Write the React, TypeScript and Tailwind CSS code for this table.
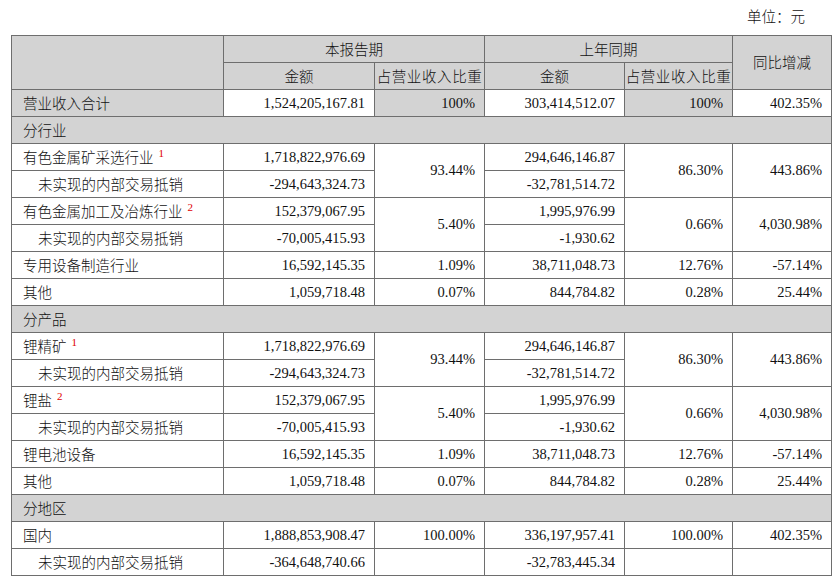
const GRAY = 'bg-[#d3d3d3]';
const cell = 'border border-[#6e6e6e] h-[27px] py-0 leading-none whitespace-nowrap';
const pad = 'px-[9px]';

type Pair = {
  label: string;
  sup?: string;
  a: string;
  b: string;
  pctA: string;
  c: string;
  d: string;
  pctB: string;
  yoy: string;
};

type Single = { label: string; a: string; pctA: string; b: string; pctB: string; yoy: string };

function Label({ text, sup, indent }: { text: string; sup?: string; indent?: boolean }) {
  return (
    <td className={`${cell} text-left pr-[9px] ${indent ? 'pl-[26px]' : 'pl-[11px]'}`}>
      <span className="cjk">{text}</span>
      {sup && (
        <span className="relative -top-[6px] ml-[5px] text-[11px] text-[#e00000] num">{sup}</span>
      )}
    </td>
  );
}

function Num({ v, rows }: { v: string; rows?: number }) {
  return (
    <td rowSpan={rows} className={`${cell} ${pad} text-right num`}>
      {v}
    </td>
  );
}

function PairRows({ p }: { p: Pair }) {
  return (
    <>
      <tr>
        <Label text={p.label} sup={p.sup} />
        <Num v={p.a} />
        <Num v={p.pctA} rows={2} />
        <Num v={p.c} />
        <Num v={p.pctB} rows={2} />
        <Num v={p.yoy} rows={2} />
      </tr>
      <tr>
        <Label text="未实现的内部交易抵销" indent />
        <Num v={p.b} />
        <Num v={p.d} />
      </tr>
    </>
  );
}

function SingleRow({ s }: { s: Single }) {
  return (
    <tr>
      <Label text={s.label} />
      <Num v={s.a} />
      <Num v={s.pctA} />
      <Num v={s.b} />
      <Num v={s.pctB} />
      <Num v={s.yoy} />
    </tr>
  );
}

function Section({ title }: { title: string }) {
  return (
    <tr className={GRAY}>
      <td colSpan={6} className={`${cell} pl-[11px] text-left cjk`}>
        {title}
      </td>
    </tr>
  );
}

const pair1: Pair = {
  label: '有色金属矿采选行业',
  sup: '1',
  a: '1,718,822,976.69',
  b: '-294,643,324.73',
  pctA: '93.44%',
  c: '294,646,146.87',
  d: '-32,781,514.72',
  pctB: '86.30%',
  yoy: '443.86%',
};
const pair2: Pair = {
  label: '有色金属加工及冶炼行业',
  sup: '2',
  a: '152,379,067.95',
  b: '-70,005,415.93',
  pctA: '5.40%',
  c: '1,995,976.99',
  d: '-1,930.62',
  pctB: '0.66%',
  yoy: '4,030.98%',
};
const equip: Single = {
  label: '专用设备制造行业',
  a: '16,592,145.35',
  pctA: '1.09%',
  b: '38,711,048.73',
  pctB: '12.76%',
  yoy: '-57.14%',
};
const other: Single = {
  label: '其他',
  a: '1,059,718.48',
  pctA: '0.07%',
  b: '844,784.82',
  pctB: '0.28%',
  yoy: '25.44%',
};

export default function App() {
  return (
    <div className="w-[840px] h-[586px] bg-white text-[#111] overflow-hidden">
      <style>{`
        .num { font-family: "Liberation Serif", "Noto Sans CJK SC", serif; }
        .cjk { font-family: "Noto Sans CJK SC", "Liberation Serif", sans-serif; font-weight: 300; }
      `}</style>
      <div className="h-[35px] flex items-start justify-end pr-[35px] pt-[7px] text-[14.5px] leading-[18px] cjk">
        单位：元
      </div>
      <div className="pl-[11px]">
        <table className="table-fixed border-collapse text-[14.5px] w-[820px]">
          <colgroup>
            <col className="w-[212px]" />
            <col className="w-[151px]" />
            <col className="w-[110px]" />
            <col className="w-[140px]" />
            <col className="w-[108px]" />
            <col className="w-[99px]" />
          </colgroup>
          <tbody>
            <tr className={GRAY}>
              <td rowSpan={2} className={cell}></td>
              <td colSpan={2} className={`${cell} text-center cjk`}>本报告期</td>
              <td colSpan={2} className={`${cell} text-center cjk`}>上年同期</td>
              <td rowSpan={2} className={`${cell} text-center cjk`}>同比增减</td>
            </tr>
            <tr className={GRAY}>
              <td className={`${cell} text-center cjk`}>金额</td>
              <td className={`${cell} text-center cjk tracking-[0.6px]`}>占营业收入比重</td>
              <td className={`${cell} text-center cjk`}>金额</td>
              <td className={`${cell} text-center cjk tracking-[0.6px]`}>占营业收入比重</td>
            </tr>
            <tr>
              <td className={`${cell} ${GRAY} pl-[11px] cjk`}>营业收入合计</td>
              <td className={`${cell} ${pad} text-right num bg-white`}>1,524,205,167.81</td>
              <td className={`${cell} ${pad} text-right num ${GRAY}`}>100%</td>
              <td className={`${cell} ${pad} text-right num bg-white`}>303,414,512.07</td>
              <td className={`${cell} ${pad} text-right num ${GRAY}`}>100%</td>
              <td className={`${cell} ${pad} text-right num bg-white`}>402.35%</td>
            </tr>
            <Section title="分行业" />
            <PairRows p={pair1} />
            <PairRows p={pair2} />
            <SingleRow s={equip} />
            <SingleRow s={other} />
            <Section title="分产品" />
            <PairRows p={{ ...pair1, label: '锂精矿' }} />
            <PairRows p={{ ...pair2, label: '锂盐' }} />
            <SingleRow s={{ ...equip, label: '锂电池设备' }} />
            <SingleRow s={other} />
            <Section title="分地区" />
            <SingleRow
              s={{
                label: '国内',
                a: '1,888,853,908.47',
                pctA: '100.00%',
                b: '336,197,957.41',
                pctB: '100.00%',
                yoy: '402.35%',
              }}
            />
            <tr>
              <Label text="未实现的内部交易抵销" indent />
              <Num v="-364,648,740.66" />
              <td className={cell}></td>
              <Num v="-32,783,445.34" />
              <td className={cell}></td>
              <td className={cell}></td>
            </tr>
          </tbody>
        </table>
      </div>
    </div>
  );
}
